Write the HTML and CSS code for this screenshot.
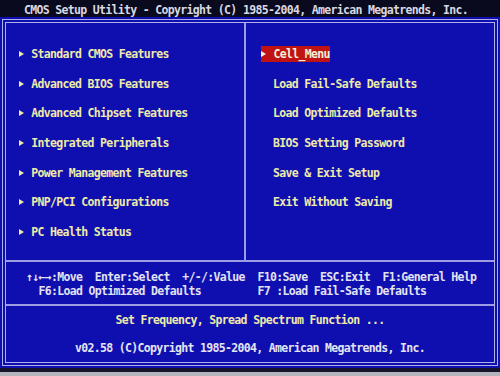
FILE: index.html
```html
<!DOCTYPE html>
<html lang="en">
<head>
    <meta charset="UTF-8" />
    <title>CMOS Setup Utility</title>
    <link rel="stylesheet" href="styles.css">
</head>
<body>
    <div class="title">CMOS Setup Utility - Copyright (C) 1985-2004, American Megatrends, Inc.</div>

    <div class="screen">
        <div class="frame">
            <div class="menu">
                <div class="col left">
                    <div class="item"><span class="arrow"><i></i></span>Standard CMOS Features</div>
                    <div class="item"><span class="arrow"><i></i></span>Advanced BIOS Features</div>
                    <div class="item"><span class="arrow"><i></i></span>Advanced Chipset Features</div>
                    <div class="item"><span class="arrow"><i></i></span>Integrated Peripherals</div>
                    <div class="item"><span class="arrow"><i></i></span>Power Management Features</div>
                    <div class="item"><span class="arrow"><i></i></span>PNP/PCI Configurations</div>
                    <div class="item"><span class="arrow"><i></i></span>PC Health Status</div>
                </div>
                <div class="col right">
                    <div class="item"><span class="sel"><span class="arrow"><i></i></span>Cell_Menu</span></div>
                    <div class="item"><span class="arrow"></span>Load Fail-Safe Defaults</div>
                    <div class="item"><span class="arrow"></span>Load Optimized Defaults</div>
                    <div class="item"><span class="arrow"></span>BIOS Setting Password</div>
                    <div class="item"><span class="arrow"></span>Save &amp; Exit Setup</div>
                    <div class="item"><span class="arrow"></span>Exit Without Saving</div>
                </div>
            </div>

            <div class="help">
                <div class="line">↑↓←→:Move  Enter:Select  +/-/:Value  F10:Save  ESC:Exit  F1:General Help</div>
                <div class="line">  F6:Load Optimized Defaults         F7 :Load Fail-Safe Defaults</div>
            </div>

            <div class="status">
                <div class="line status-text">Set Frequency, Spread Spectrum Function ...</div>
                <div class="line copy">v02.58 (C)Copyright 1985-2004, American Megatrends, Inc.</div>
            </div>
        </div>
    </div>
    <div class="edge"></div>
</body>
</html>
```

FILE: styles.css
```css
body {
    margin: 0;
    padding: 0;
    width: 500px;
    height: 376px;
    overflow: hidden;
    background-color: #b4b4bc;
    font-family: "DejaVu Sans Mono", "Liberation Mono", monospace;
    font-weight: bold;
    font-size: 11.5px;
    letter-spacing: -0.67px;
}
.title {
    height: 17px;
    box-sizing: border-box;
    padding: 3px 0 0 24px;
    line-height: 14px;
    background-color: #0a0a1e;
    color: #d8d8e2;
    white-space: pre;
}
.screen {
    height: 351px;
    box-sizing: border-box;
    padding: 2px;
    background-color: #0f0fb0;
}
.frame {
    height: 347px;
    box-sizing: border-box;
    border: 4px double #b0b0ea;
    display: flex;
    flex-direction: column;
}
.menu {
    height: 237px;
    flex: none;
    border-bottom: 2px solid #9c9ce2;
    display: flex;
}
.col {
    padding-top: 16px;
    color: #eeeaa8;
}
.col.left {
    width: 240px;
    box-sizing: border-box;
    padding-left: 12.75px;
    border-right: 2px solid #9c9ce2;
}
.col.right {
    flex: 1;
    padding-left: 14.5px;
}
.item {
    height: 29.7px;
    display: flex;
    align-items: center;
    white-space: pre;
}
.arrow {
    width: 12.5px;
    flex: none;
    display: inline-flex;
    align-items: center;
}
.arrow i {
    width: 0;
    height: 0;
    border-left: 5px solid #eeeaa8;
    border-top: 3.5px solid transparent;
    border-bottom: 3.5px solid transparent;
}
.sel {
    display: inline-flex;
    align-items: center;
    height: 16px;
    line-height: 16px;
    padding-left: 0.5px;
    background-color: #c01414;
    color: #f4f0d8;
}
.sel .arrow i {
    border-left-color: #f4f0f0;
}
.line {
    white-space: pre;
}
.help {
    height: 44px;
    flex: none;
    box-sizing: border-box;
    padding: 8px 0 0 20px;
    border-bottom: 2px solid #9c9ce2;
    line-height: 14px;
    color: #e2e2f0;
}
.status {
    height: 54px;
    flex: none;
    box-sizing: border-box;
    padding-top: 7px;
    text-align: center;
    line-height: 14px;
}
.status-text {
    color: #eeeaa8;
    margin-bottom: 14px;
}
.copy {
    color: #e4e4f0;
}
.edge {
    height: 4px;
    background-color: #14142a;
}
```
